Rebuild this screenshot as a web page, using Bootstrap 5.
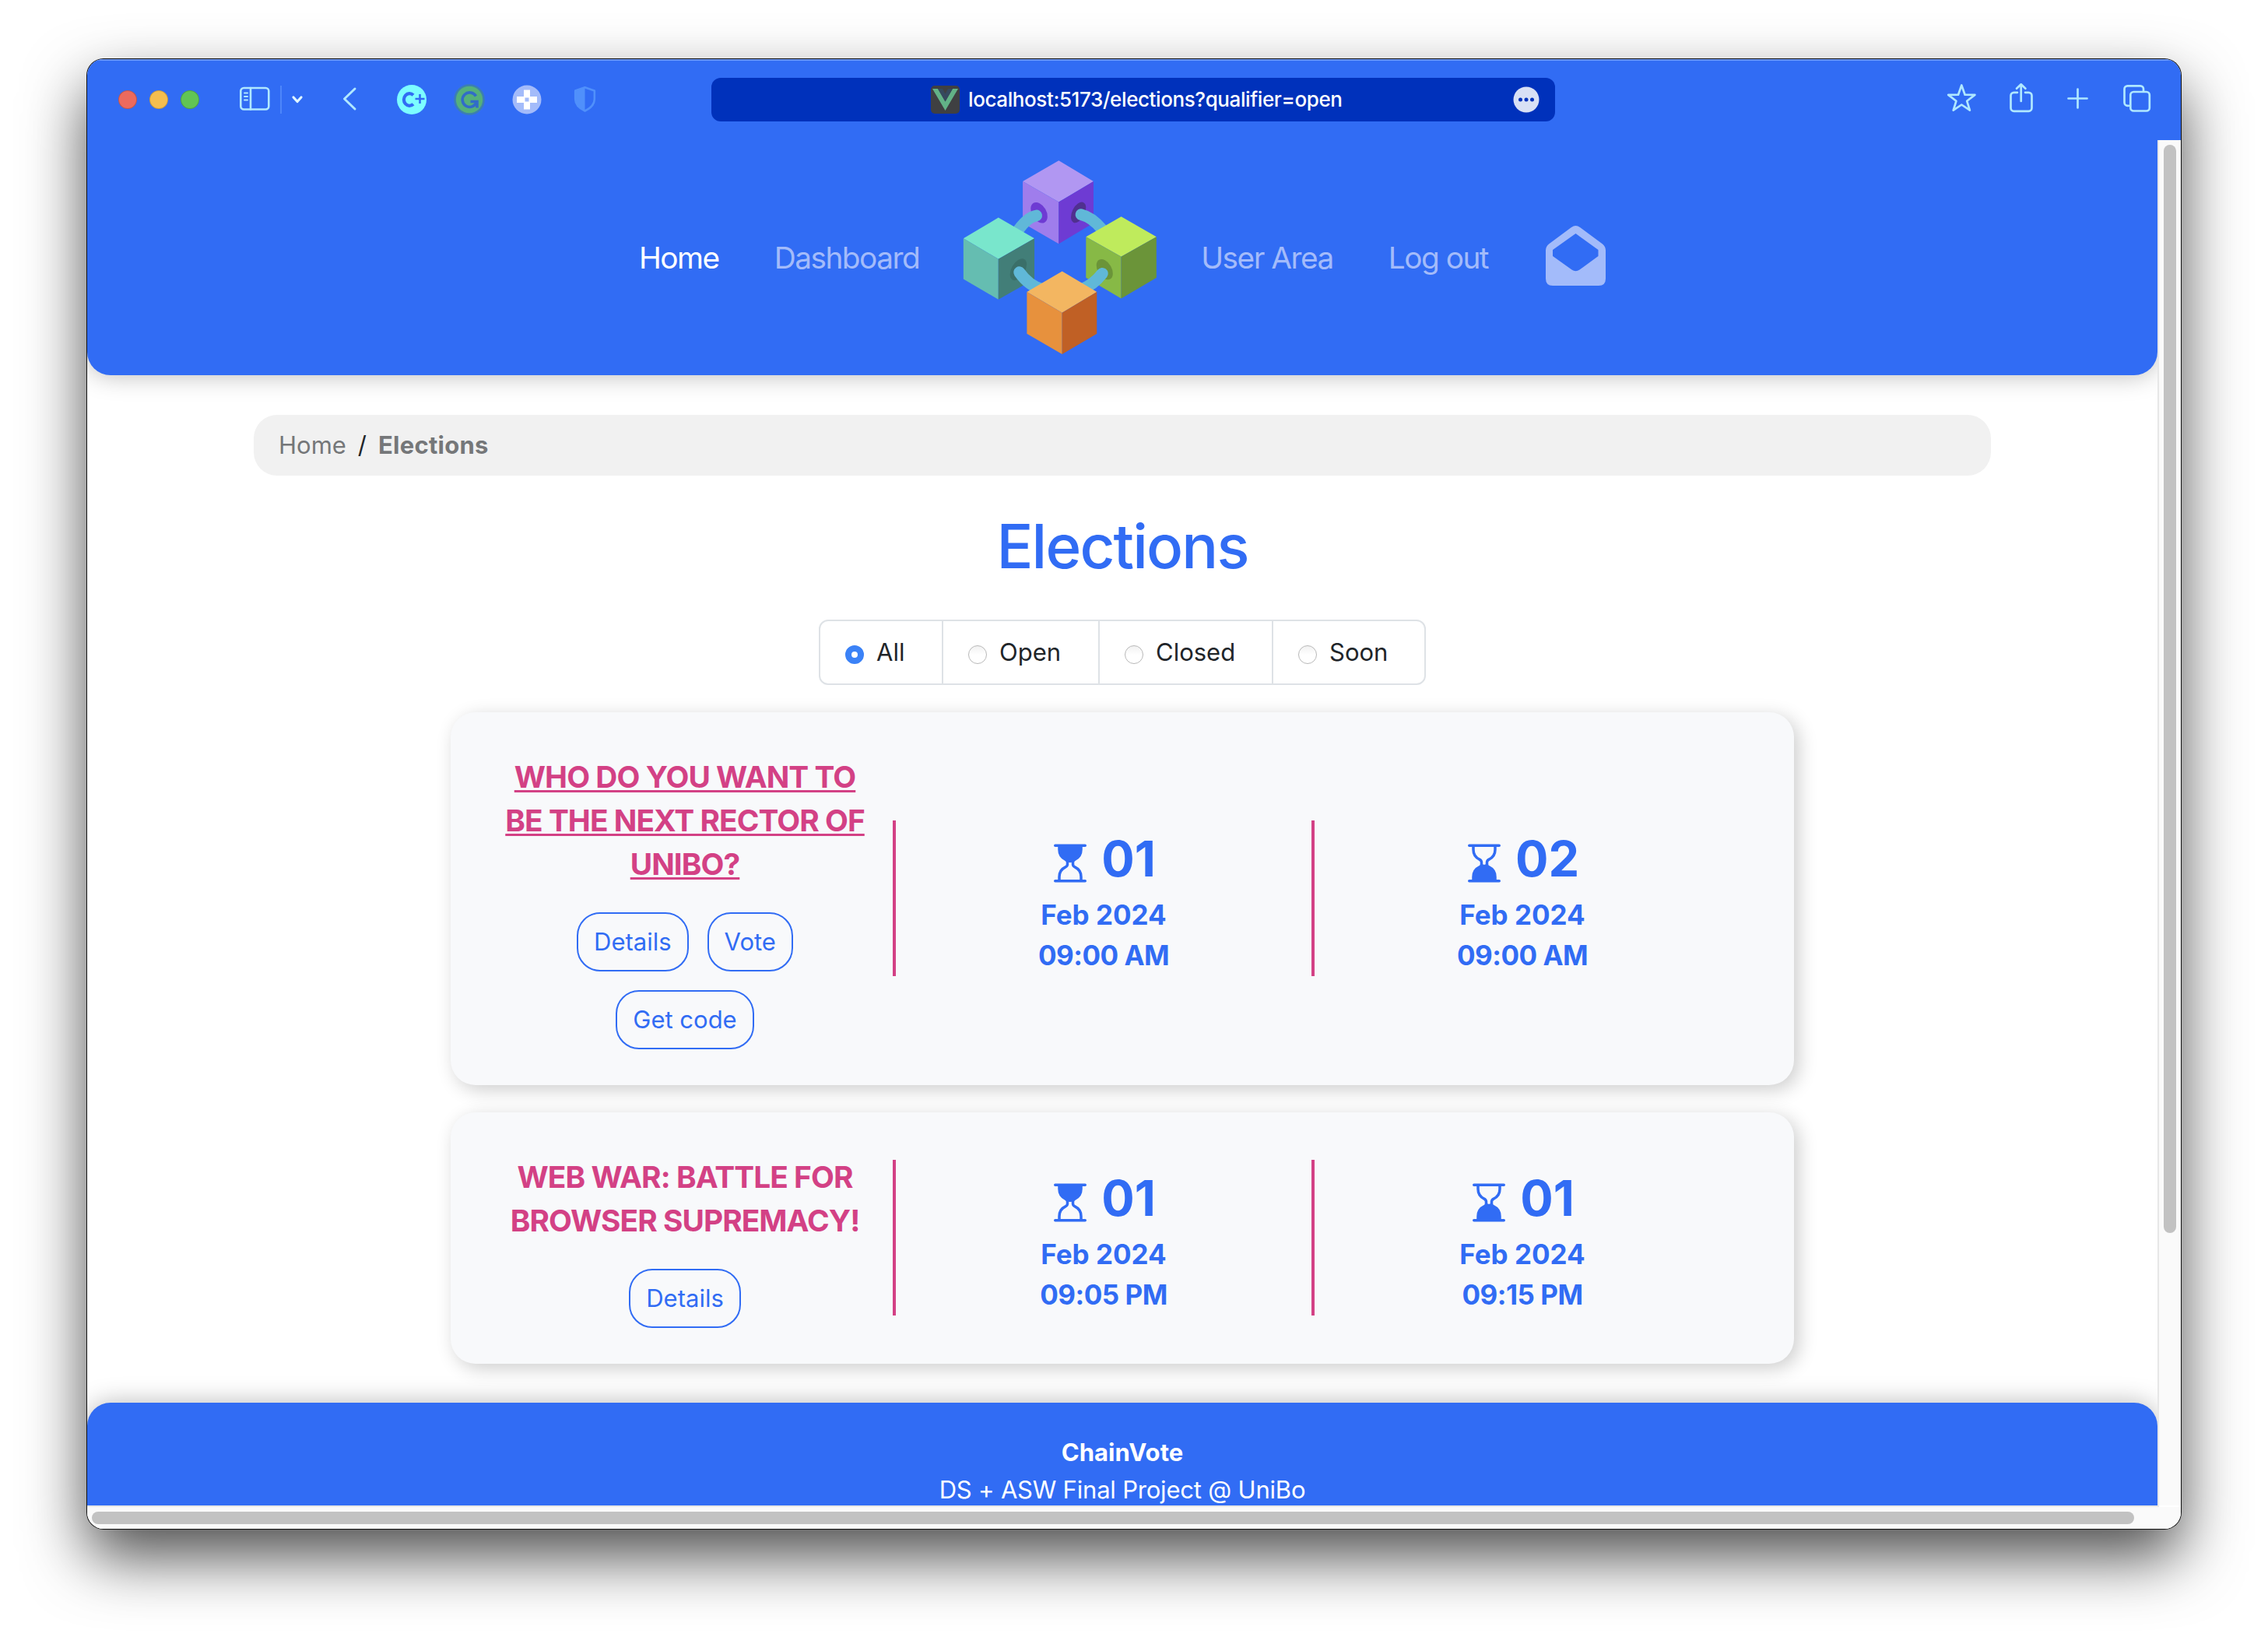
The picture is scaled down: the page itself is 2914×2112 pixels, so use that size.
<!DOCTYPE html>
<html lang="en">
<head>
<meta charset="utf-8">
<title>ChainVote - Elections</title>
<link href="https://cdn.jsdelivr.net/npm/bootstrap@5.3.0/dist/css/bootstrap.min.css" rel="stylesheet">
<style>
:root{--cv-blue:#316cf4;--cv-pink:#d34185;--cv-ice:#b0e8ff}
html{font-size:32px}
body{font-family:Inter,"Liberation Sans",sans-serif;font-size:31px;line-height:48px;background:#fff;width:2914px;height:2112px;overflow:hidden;color:#212529}
svg{display:block;flex:none}
.desk{display:flow-root}
.win{margin:76px 0 0 112px;width:2690px;height:1888px;border-radius:21px;overflow:hidden;background:#fff;box-shadow:0 0 0 1px #111,0 36px 80px rgba(0,0,0,.7)}
.toolbar{height:104px;background:var(--cv-blue);box-shadow:inset 0 2px 0 #6795f7;padding:0 38px 0 40px;color:var(--cv-ice)}
.light{width:24px;height:24px;border-radius:50%;margin-right:16px;border:1px solid rgba(0,0,0,.18)}
.light-close{background:#ec6a5e}
.light-min{background:#f4be4f}
.light-max{background:#61c554}
.leftside{width:762px}
.addr{width:1084px;height:56px;border-radius:12px;background:#0031bb;color:#fff;font-size:26px;line-height:56px;font-weight:500;letter-spacing:-.4px;padding:0 20px 0 282px}
.addr span{margin-left:11px}
.viewport{width:2660px;height:1754px;overflow:hidden}
.topnav{height:302px;background:var(--cv-blue);border-radius:0 0 30px 30px;box-shadow:0 0 32px rgba(0,0,0,.28)}
.topnav .nav-link{font-size:38.8px;letter-spacing:-1.5px;font-weight:430;line-height:60px;padding:0;color:#a3bbfa;white-space:nowrap}
.topnav .nav-link.active{color:#fff}
.topnav .nav-second{margin-left:71px}
.logo{margin:-1px 57px 0 56px}
.mail{margin:-5px 0 0 74px}
.crumbs{width:2232px;height:78px;margin:51px auto 0;border-radius:30px;background:#f1f1f1;padding:0 32px}
.crumbs a,.crumbs a:not([href]):not([class]),.crumbs b{color:#757779;text-decoration:none}
.crumbs b{letter-spacing:.25px}
.crumbs .slash{margin:0 15px}
.heading{font-size:78px;line-height:96px;font-weight:500;letter-spacing:-1.85px;color:var(--cv-blue);margin:43px 0 46px}
.filters{height:84px;width:780px;border:2px solid #dee2e6;border-radius:12px}
.filters label{border-right:2px solid #dee2e6;padding-left:32px;height:80px}
.filters label:last-child{border-right:0}
.f-all{width:158px}.f-open{width:201px}.f-closed{width:223px}.f-soon{width:194px}
.dot{appearance:none;width:24px;height:24px;border-radius:50%;border:1px solid #b8b8b8;background:linear-gradient(#f1f1f1,#fff 50%);margin:5px 16px 0 0;flex:none}
.dot:checked{border:8px solid #3b82f7;background:#fff}
.elec{width:1726px;border-radius:32px;background:#f8f9fb;box-shadow:6px 6px 24px rgba(0,0,0,.2);margin:35px auto 0;padding:0 80px 0 32px}
.elec-tall{height:479px}
.elec-short{height:323px}
.pane{width:538px;flex:none}
.about{padding-top:8px}
.bar{width:4px;height:200px;background:var(--cv-pink);margin:0 -2px 1px;flex:none}
.ttl{font-size:38.8px;line-height:56px;font-weight:700;letter-spacing:-.93px;color:var(--cv-pink);margin:0 0 34px;white-space:nowrap;text-transform:uppercase}
.ttl.open{text-decoration:underline;text-decoration-thickness:3px;text-underline-offset:3px;text-decoration-skip-ink:none}
.acts{gap:24px}
.acts .btn{height:76px;border:2px solid var(--cv-blue);border-radius:30px;color:var(--cv-blue);font-size:31px;line-height:72px;padding:0 20px}
.when{font-weight:700;color:var(--cv-blue);font-size:35px;line-height:52px;text-align:center;margin-bottom:4px}
.hour{letter-spacing:-.5px}
.day{height:96px;font-size:63px;line-height:92px;padding:4px 4px 0 0}
.day svg{width:56px;height:56px;margin:13px 12px 0 0}
.foot{height:132px;background:var(--cv-blue);border-radius:30px 30px 0 0;box-shadow:0 0 32px rgba(0,0,0,.28);margin-top:50px;padding-top:40px;color:#fff;text-align:center;letter-spacing:-.2px}
.foot b{letter-spacing:.05px}
.vtrack{width:30px;background:#fafafa;border-left:2px solid #e7e7e7;padding:6px 0 0 6px}
.vtrack div{width:16px;height:1398px;border-radius:8px;background:#c2c2c2}
.htrack{height:30px;background:#fafafa;padding:6px 0 0 6px}
.htrack div{width:2624px;height:16px;border-radius:8px;background:#c2c2c2}
.hline{width:2662px;height:2px;background:#e7e7e7}
</style>
<script src="https://cdn.jsdelivr.net/npm/bootstrap@5.3.0/dist/js/bootstrap.bundle.min.js"></script>
</head>
<body>
<svg width="0" height="0" class="position-absolute"><defs>
<symbol id="hgTop" viewBox="0 0 16 16"><path fill="currentColor" d="M2 14.5a.5.5 0 0 0 .5.5h11a.5.5 0 1 0 0-1h-1v-1a4.5 4.5 0 0 0-2.557-4.06c-.29-.139-.443-.377-.443-.59v-.7c0-.213.154-.451.443-.59A4.5 4.5 0 0 0 12.5 3V2h1a.5.5 0 0 0 0-1h-11a.5.5 0 0 0 0 1h1v1a4.5 4.5 0 0 0 2.557 4.06c.29.139.443.377.443.59v.7c0 .213-.154.451-.443.59A4.5 4.5 0 0 0 3.5 13v1h-1a.5.5 0 0 0-.5.5zm2.5-.5v-1a3.5 3.5 0 0 1 1.989-3.158c.533-.256 1.011-.79 1.011-1.491v-.702s.18.101.5.101.5-.1.5-.1v.7c0 .701.478 1.236 1.011 1.492A3.5 3.5 0 0 1 11.5 13v1h-7z"/></symbol>
<symbol id="hgEnd" viewBox="0 0 16 16"><path fill="currentColor" d="M2 1.5a.5.5 0 0 1 .5-.5h11a.5.5 0 0 1 0 1h-1v1a4.5 4.5 0 0 1-2.557 4.06c-.29.139-.443.377-.443.59v.7c0 .213.154.451.443.59A4.5 4.5 0 0 1 12.5 13v1h1a.5.5 0 0 1 0 1h-11a.5.5 0 1 1 0-1h1v-1a4.5 4.5 0 0 1 2.557-4.06c.29-.139.443-.377.443-.59v-.7c0-.213-.154-.451-.443-.59A4.5 4.5 0 0 1 3.5 3V2h-1a.5.5 0 0 1-.5-.5zm2.5.5v1a3.5 3.5 0 0 0 1.989 3.158c.533.256 1.011.791 1.011 1.491v.702s.18.149.5.149.5-.15.5-.15v-.7c0-.701.478-1.236 1.011-1.492A3.5 3.5 0 0 0 11.5 3V2h-7z"/></symbol>
</defs></svg>
<div class="desk">
<div class="win">
  <div class="toolbar d-flex align-items-center">
    <div class="leftside d-flex align-items-center">
      <div class="light light-close"></div><div class="light light-min"></div><div class="light light-max"></div>
      <svg width="610" height="60" viewBox="272 98 610 60" fill="none" stroke="currentColor" stroke-width="2.6" stroke-linecap="round" stroke-linejoin="round">
        <rect x="309.3" y="113" width="36" height="27.5" rx="4"/><path d="M322 113v27.500"/><path d="M314 119.500h4M314 124h4M314 128.400h4" stroke-width="2"/>
        <path d="M361 110v36" stroke="#4d86fa" stroke-width="2" stroke-linecap="butt"/>
        <path d="M377 125l5 5.500 5-5.500" stroke="#dff6ff" stroke-width="3.2"/>
        <path d="M456 114L442.500 127l13.500 13" stroke-width="3"/>
        <g stroke="none"><circle cx="529" cy="128" r="19" fill="#7cfdff"/>
        <circle cx="603" cy="128" r="18.500" fill="#55b07b" stroke="#3c7fb0"/>
        <circle cx="677" cy="128" r="18.500" fill="#a3bbfa"/>
        <path fill="#fff" fill-rule="evenodd" d="M673 115.500h8v8.500h9v8h-9v8.500h-8v-8.500h-9v-8h9zM674.500 125.500v5h5v-5z"/></g>
        <path d="M531 122.300a7.200 7.800 0 1 0 0 11.400" stroke="#316cf4" stroke-width="4.200" stroke-linecap="butt"/><path d="M533.500 127h12M539.500 121v12" stroke="#316cf4" stroke-width="2.600" stroke-linecap="butt"/>
        <path d="M611.500 123.500a9.300 9.300 0 1 0 .8 7.500M604.500 130.500h8.500v8" stroke="#316cc8" stroke-width="3.600" stroke-linecap="butt" stroke-linejoin="miter"/>
        <path d="M751.500 112.300l12.300 4.200v11c0 7-5 11.500-12.300 15-7.300-3.500-12.300-8-12.300-15v-11z" stroke="#5090fb" stroke-width="2.600"/><path d="M751.500 112v31c-7.500-3.500-12.500-8.500-12.500-15.500v-11z" fill="#5090fb" stroke="none"/>
      </svg>
    </div>
    <div class="addr d-flex align-items-center">
      <svg width="37" height="36" viewBox="0 0 37 36"><rect width="37" height="36" rx="5" fill="#3f4042"/><path d="M2 4h7l9.500 16.500L28 4h7L18.500 32z" fill="#62b287"/><path d="M9 4h6l3.500 6.500L22 4h6l-9.500 16.500z" fill="#35495e"/></svg>
      <span>localhost:5173/elections?qualifier=open</span>
      <svg class="ms-auto" width="34" height="34" viewBox="0 0 34 34"><circle cx="17" cy="17" r="16.500" fill="#d8e0f5"/><g fill="#0031bb"><circle cx="9.500" cy="17" r="2.500"/><circle cx="17" cy="17" r="2.500"/><circle cx="24.500" cy="17" r="2.500"/></g></svg>
    </div>
    <svg class="ms-auto" width="264" height="44" viewBox="2500 106 264 44" fill="none" stroke="currentColor" stroke-width="2.700" stroke-linecap="round" stroke-linejoin="round">
      <path d="M2520.300 109.500l4.300 12.200 12.800.2-10.200 7.900 3.700 11.900-10.600-7.200-10.600 7.200 3.700-11.900-10.200-7.900 12.800-.2z"/>
      <path d="M2592 118.800h-4.500a4 4 0 0 0-4 4v16a4 4 0 0 0 4 4h19a4 4 0 0 0 4-4v-16a4 4 0 0 0-4-4h-4.500M2596.700 130v-21M2591 113.800l5.700-5.500 5.700 5.500"/>
      <path d="M2657.500 126.500h24M2669.500 114.500v24"/>
      <path d="M2735 135.800h-1.500a4 4 0 0 1-4-4v-17.500a4 4 0 0 1 4-4h16.500a4 4 0 0 1 4 4v2.500"/><rect x="2737.300" y="118" width="24.500" height="24.500" rx="4"/>
    </svg>
  </div>
  <div class="d-flex">
    <div class="viewport">
      <nav class="topnav d-flex align-items-center justify-content-center">
        <a class="nav-link active">Home</a>
        <a class="nav-link nav-second">Dashboard</a>
        <svg class="logo" width="249" height="249" viewBox="54 47 747 748">
          <path fill="#b197f2" d="M424 48l134 80-134 80-139-80z"/><path fill="#9f7dec" d="M285 128l139 80v161l-139-80z"/><path fill="#6e3bd3" d="M424 208l134-80v161l-134 80z"/>
          <ellipse cx="348" cy="249" rx="28" ry="43" transform="rotate(-30 348 249)" fill="#6e3bd3"/><ellipse cx="500" cy="248" rx="24" ry="43" transform="rotate(27 500 248)" fill="#50308f"/>
          <path d="M338 260Q300 266 258 330M510 256Q552 266 590 312" stroke="#60b8d8" stroke-width="44" stroke-linecap="round" fill="none"/>
          <path fill="#79e6cc" d="M191 268l139 80-139 80-135-80z"/><path fill="#65bdb1" d="M56 348l135 80v156L56 505z"/><path fill="#427e78" d="M191 428l139-80v157l-139 79z"/>
          <path fill="#bfeb5c" d="M665 264l136 78-136 77-136-77z"/><path fill="#87b946" d="M529 342l136 77v161l-136-80z"/><path fill="#6b9439" d="M665 419l136-77v158l-136 80z"/>
          <ellipse cx="268" cy="468" rx="26" ry="46" transform="rotate(30 268 468)" fill="#3a6f69"/><ellipse cx="601" cy="468" rx="27" ry="43" transform="rotate(-30 601 468)" fill="#6b9439"/>
          <path d="M272 479Q308 530 360 545M592 484Q556 530 510 545" stroke="#60b8d8" stroke-width="45" stroke-linecap="round" fill="none"/>
          <path fill="#f3b661" d="M437 475l134 80-134 80-136-80z"/><path fill="#e7913d" d="M301 555l136 80v160l-136-79z"/><path fill="#c06025" d="M437 635l134-80v161l-134 79z"/>
        </svg>
        <a class="nav-link">User Area</a>
        <a class="nav-link nav-second">Log out</a>
        <svg class="mail" width="77" height="77" viewBox="0 0 77 77"><path fill="#a3bbfa" fill-rule="evenodd" d="M33 2q5.500-4 11 0l29 21.500q4 3.500 4 8V68q0 9-9 9H9q-9 0-9-9V31.500q0-4.500 4-8zM38.500 10L9 31v8l24.500 17.500q5 3.500 10 0L67.500 39v-8z"/></svg>
      </nav>
      <div class="crumbs d-flex align-items-center">
        <a>Home</a><span class="slash">/</span><b>Elections</b>
      </div>
      <h1 class="heading text-center">Elections</h1>
      <div class="filters d-flex mx-auto">
        <label class="f-all d-flex align-items-center"><input class="dot" type="radio" name="q" checked>All</label>
        <label class="f-open d-flex align-items-center"><input class="dot" type="radio" name="q">Open</label>
        <label class="f-closed d-flex align-items-center"><input class="dot" type="radio" name="q">Closed</label>
        <label class="f-soon d-flex align-items-center"><input class="dot" type="radio" name="q">Soon</label>
      </div>
      <div class="elec elec-tall d-flex align-items-center">
        <div class="pane about text-center">
          <h2 class="ttl open">Who do you want to<br>be the next rector of<br>UniBo?</h2>
          <div class="acts d-flex flex-wrap justify-content-center px-5"><a class="btn">Details</a><a class="btn">Vote</a><a class="btn">Get code</a></div>
        </div>
        <div class="bar"></div>
        <div class="pane when"><div class="day d-flex align-items-center justify-content-center"><svg><use href="#hgTop"/></svg><span>01</span></div><div>Feb 2024</div><div class="hour">09:00 AM</div></div>
        <div class="bar"></div>
        <div class="pane when"><div class="day d-flex align-items-center justify-content-center"><svg><use href="#hgEnd"/></svg><span>02</span></div><div>Feb 2024</div><div class="hour">09:00 AM</div></div>
      </div>
      <div class="elec elec-short d-flex align-items-center">
        <div class="pane about text-center">
          <h2 class="ttl">Web War: Battle for<br>Browser Supremacy!</h2>
          <div class="acts d-flex justify-content-center"><a class="btn">Details</a></div>
        </div>
        <div class="bar"></div>
        <div class="pane when"><div class="day d-flex align-items-center justify-content-center"><svg><use href="#hgTop"/></svg><span>01</span></div><div>Feb 2024</div><div class="hour">09:05 PM</div></div>
        <div class="bar"></div>
        <div class="pane when"><div class="day d-flex align-items-center justify-content-center"><svg><use href="#hgEnd"/></svg><span>01</span></div><div>Feb 2024</div><div class="hour">09:15 PM</div></div>
      </div>
      <footer class="foot"><b class="d-block">ChainVote</b>DS + ASW Final Project @ UniBo</footer>
    </div>
    <div class="vtrack"><div></div></div>
  </div>
  <div class="hline"></div>
  <div class="htrack"><div></div></div>
</div>
</div>
</body>
</html>
